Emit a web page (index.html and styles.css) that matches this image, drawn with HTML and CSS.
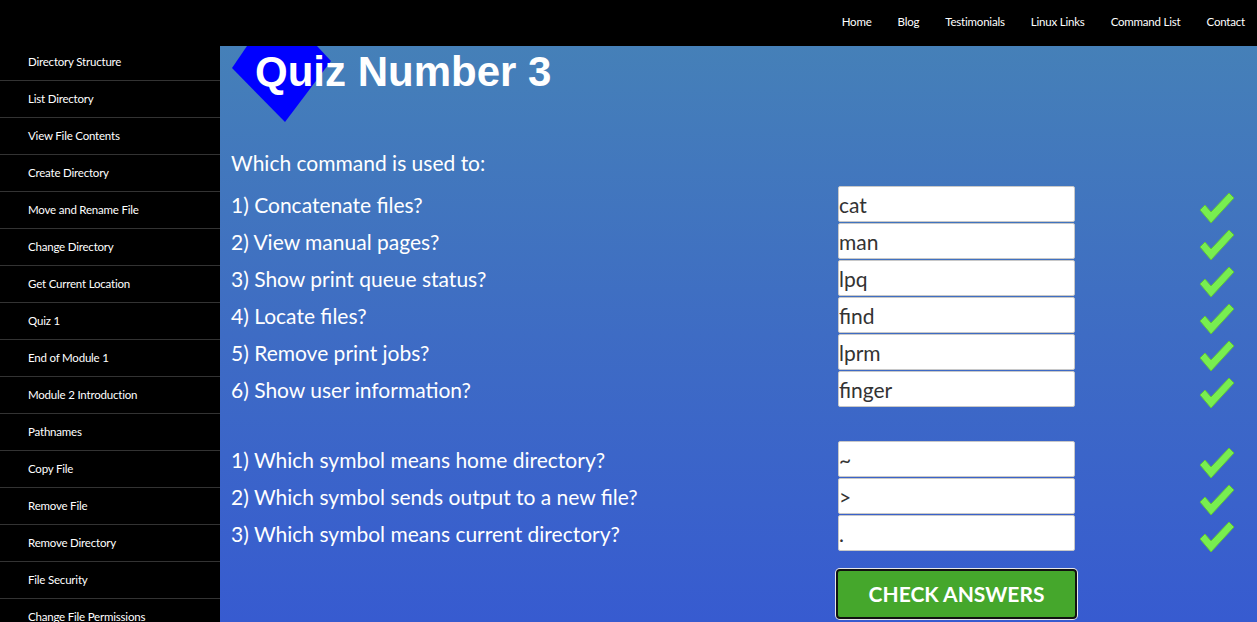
FILE: index.html
```html
<!DOCTYPE html>
<html>
<head>
<meta charset="utf-8">
<link rel="stylesheet" href="styles.css">
</head>
<body>
<header class="topbar">
  <nav class="topnav">
    <a>Home</a><a>Blog</a><a>Testimonials</a><a>Linux Links</a><a>Command List</a><a>Contact</a>
  </nav>
</header>
<div class="layout">
  <aside class="sidebar">
    <a class="side-item first">Directory Structure</a>
    <a class="side-item">List Directory</a>
    <a class="side-item">View File Contents</a>
    <a class="side-item">Create Directory</a>
    <a class="side-item">Move and Rename File</a>
    <a class="side-item">Change Directory</a>
    <a class="side-item">Get Current Location</a>
    <a class="side-item">Quiz 1</a>
    <a class="side-item">End of Module 1</a>
    <a class="side-item">Module 2 Introduction</a>
    <a class="side-item">Pathnames</a>
    <a class="side-item">Copy File</a>
    <a class="side-item">Remove File</a>
    <a class="side-item">Remove Directory</a>
    <a class="side-item">File Security</a>
    <a class="side-item">Change File Permissions</a>
  </aside>
  <main class="main">
    <svg class="diamond" width="120" height="80" viewBox="0 0 120 80"><polygon points="12,22 27,0 97,0 111,15 65,76" fill="#0000ff"/></svg>
    <h1 class="title">Quiz Number 3</h1>
    <p class="intro">Which command is used to:</p>
    <div class="quiz">
      <div class="q">1) Concatenate files?</div><input class="ans" value="cat"><div class="ok"><svg viewBox="0 0 36 32" width="36" height="32"><polygon points="1,18 6,13 12,20 30,1 35,6 12,31" fill="#78ee50" stroke="#5fc23c" stroke-width="1"/></svg></div>
      <div class="q">2) View manual pages?</div><input class="ans" value="man"><div class="ok"><svg viewBox="0 0 36 32" width="36" height="32"><polygon points="1,18 6,13 12,20 30,1 35,6 12,31" fill="#78ee50" stroke="#5fc23c" stroke-width="1"/></svg></div>
      <div class="q">3) Show print queue status?</div><input class="ans" value="lpq"><div class="ok"><svg viewBox="0 0 36 32" width="36" height="32"><polygon points="1,18 6,13 12,20 30,1 35,6 12,31" fill="#78ee50" stroke="#5fc23c" stroke-width="1"/></svg></div>
      <div class="q">4) Locate files?</div><input class="ans" value="find"><div class="ok"><svg viewBox="0 0 36 32" width="36" height="32"><polygon points="1,18 6,13 12,20 30,1 35,6 12,31" fill="#78ee50" stroke="#5fc23c" stroke-width="1"/></svg></div>
      <div class="q">5) Remove print jobs?</div><input class="ans" value="lprm"><div class="ok"><svg viewBox="0 0 36 32" width="36" height="32"><polygon points="1,18 6,13 12,20 30,1 35,6 12,31" fill="#78ee50" stroke="#5fc23c" stroke-width="1"/></svg></div>
      <div class="q">6) Show user information?</div><input class="ans" value="finger"><div class="ok"><svg viewBox="0 0 36 32" width="36" height="32"><polygon points="1,18 6,13 12,20 30,1 35,6 12,31" fill="#78ee50" stroke="#5fc23c" stroke-width="1"/></svg></div>
    </div>
    <div class="quiz second">
      <div class="q">1) Which symbol means home directory?</div><input class="ans" value="~"><div class="ok"><svg viewBox="0 0 36 32" width="36" height="32"><polygon points="1,18 6,13 12,20 30,1 35,6 12,31" fill="#78ee50" stroke="#5fc23c" stroke-width="1"/></svg></div>
      <div class="q">2) Which symbol sends output to a new file?</div><input class="ans" value="&gt;"><div class="ok"><svg viewBox="0 0 36 32" width="36" height="32"><polygon points="1,18 6,13 12,20 30,1 35,6 12,31" fill="#78ee50" stroke="#5fc23c" stroke-width="1"/></svg></div>
      <div class="q">3) Which symbol means current directory?</div><input class="ans" value="."><div class="ok"><svg viewBox="0 0 36 32" width="36" height="32"><polygon points="1,18 6,13 12,20 30,1 35,6 12,31" fill="#78ee50" stroke="#5fc23c" stroke-width="1"/></svg></div>
    </div>
    <div class="actions">
      <button class="check">CHECK ANSWERS</button>
    </div>
  </main>
</div>
</body>
</html>
```
FILE: styles.css
```css
* { box-sizing: border-box; }
html, body { margin: 0; padding: 0; }
body {
  font-family: Lato, "Open Sans", sans-serif;
  background: #000;
  width: 1257px;
  height: 622px;
  overflow: hidden;
}
.topbar {
  height: 46px;
  background: #000;
  display: flex;
  justify-content: flex-end;
  align-items: center;
}
.topnav {
  display: flex;
  gap: 26px;
  padding-right: 12px;
  padding-bottom: 3px;
}
.topnav a {
  color: #fff;
  font-size: 11.5px;
  letter-spacing: -0.2px;
}
.layout {
  display: flex;
  height: 576px;
}
.sidebar {
  width: 220px;
  flex: none;
  background: #000;
  display: flex;
  flex-direction: column;
}
.side-item {
  display: flex;
  align-items: center;
  height: 37px;
  flex: none;
  padding-left: 28px;
  padding-bottom: 2px;
  border-bottom: 1px solid #333;
  color: #fff;
  font-size: 11.5px;
  letter-spacing: -0.2px;
}
.side-item.first { height: 35px; padding-bottom: 4px; }
.main {
  position: relative;
  flex: 1;
  overflow: hidden;
  background: linear-gradient(to bottom, #4580b8 0%, #3e6cc4 50%, #375bd0 100%);
  padding-left: 11px;
  color: #fff;
}
.diamond {
  position: absolute;
  left: 0;
  top: 0;
}
.title {
  position: relative;
  margin: 0;
  padding-left: 24px;
  padding-top: 2px;
  height: 100px;
  font-family: "Liberation Sans", Arial, sans-serif;
  font-weight: bold;
  font-size: 42px;
  line-height: 48px;
}
.intro {
  margin: 0 0 6px;
  font-size: 21px;
  line-height: 34px;
}
.quiz {
  display: grid;
  grid-template-columns: 607px 237px 1fr;
  grid-auto-rows: 37px;
  align-items: center;
}
.quiz.second { margin-top: 33px; }
.q {
  font-size: 21px;
}
.ans {
  height: 36px;
  width: 237px;
  margin-bottom: 1px;
  align-self: start;
  border: 1px solid #c8c8c8;
  border-radius: 2px;
  background: #fff;
  color: #333;
  font-family: Lato, "Open Sans", sans-serif;
  font-size: 21px;
  padding: 0;
}
.ok {
  padding-left: 124px;
  display: flex;
  align-items: center;
  padding-top: 6px;
}
.actions {
  padding-left: 605px;
  padding-top: 17px;
}
.check {
  width: 241px;
  height: 50px;
  background: #45a72c;
  border: 2px solid #111;
  border-radius: 4px;
  box-shadow: 0 0 0 1px #e8e8e8;
  color: #fff;
  font-family: Lato, "Open Sans", sans-serif;
  font-weight: bold;
  font-size: 21px;
  padding-bottom: 3px;
}
```
